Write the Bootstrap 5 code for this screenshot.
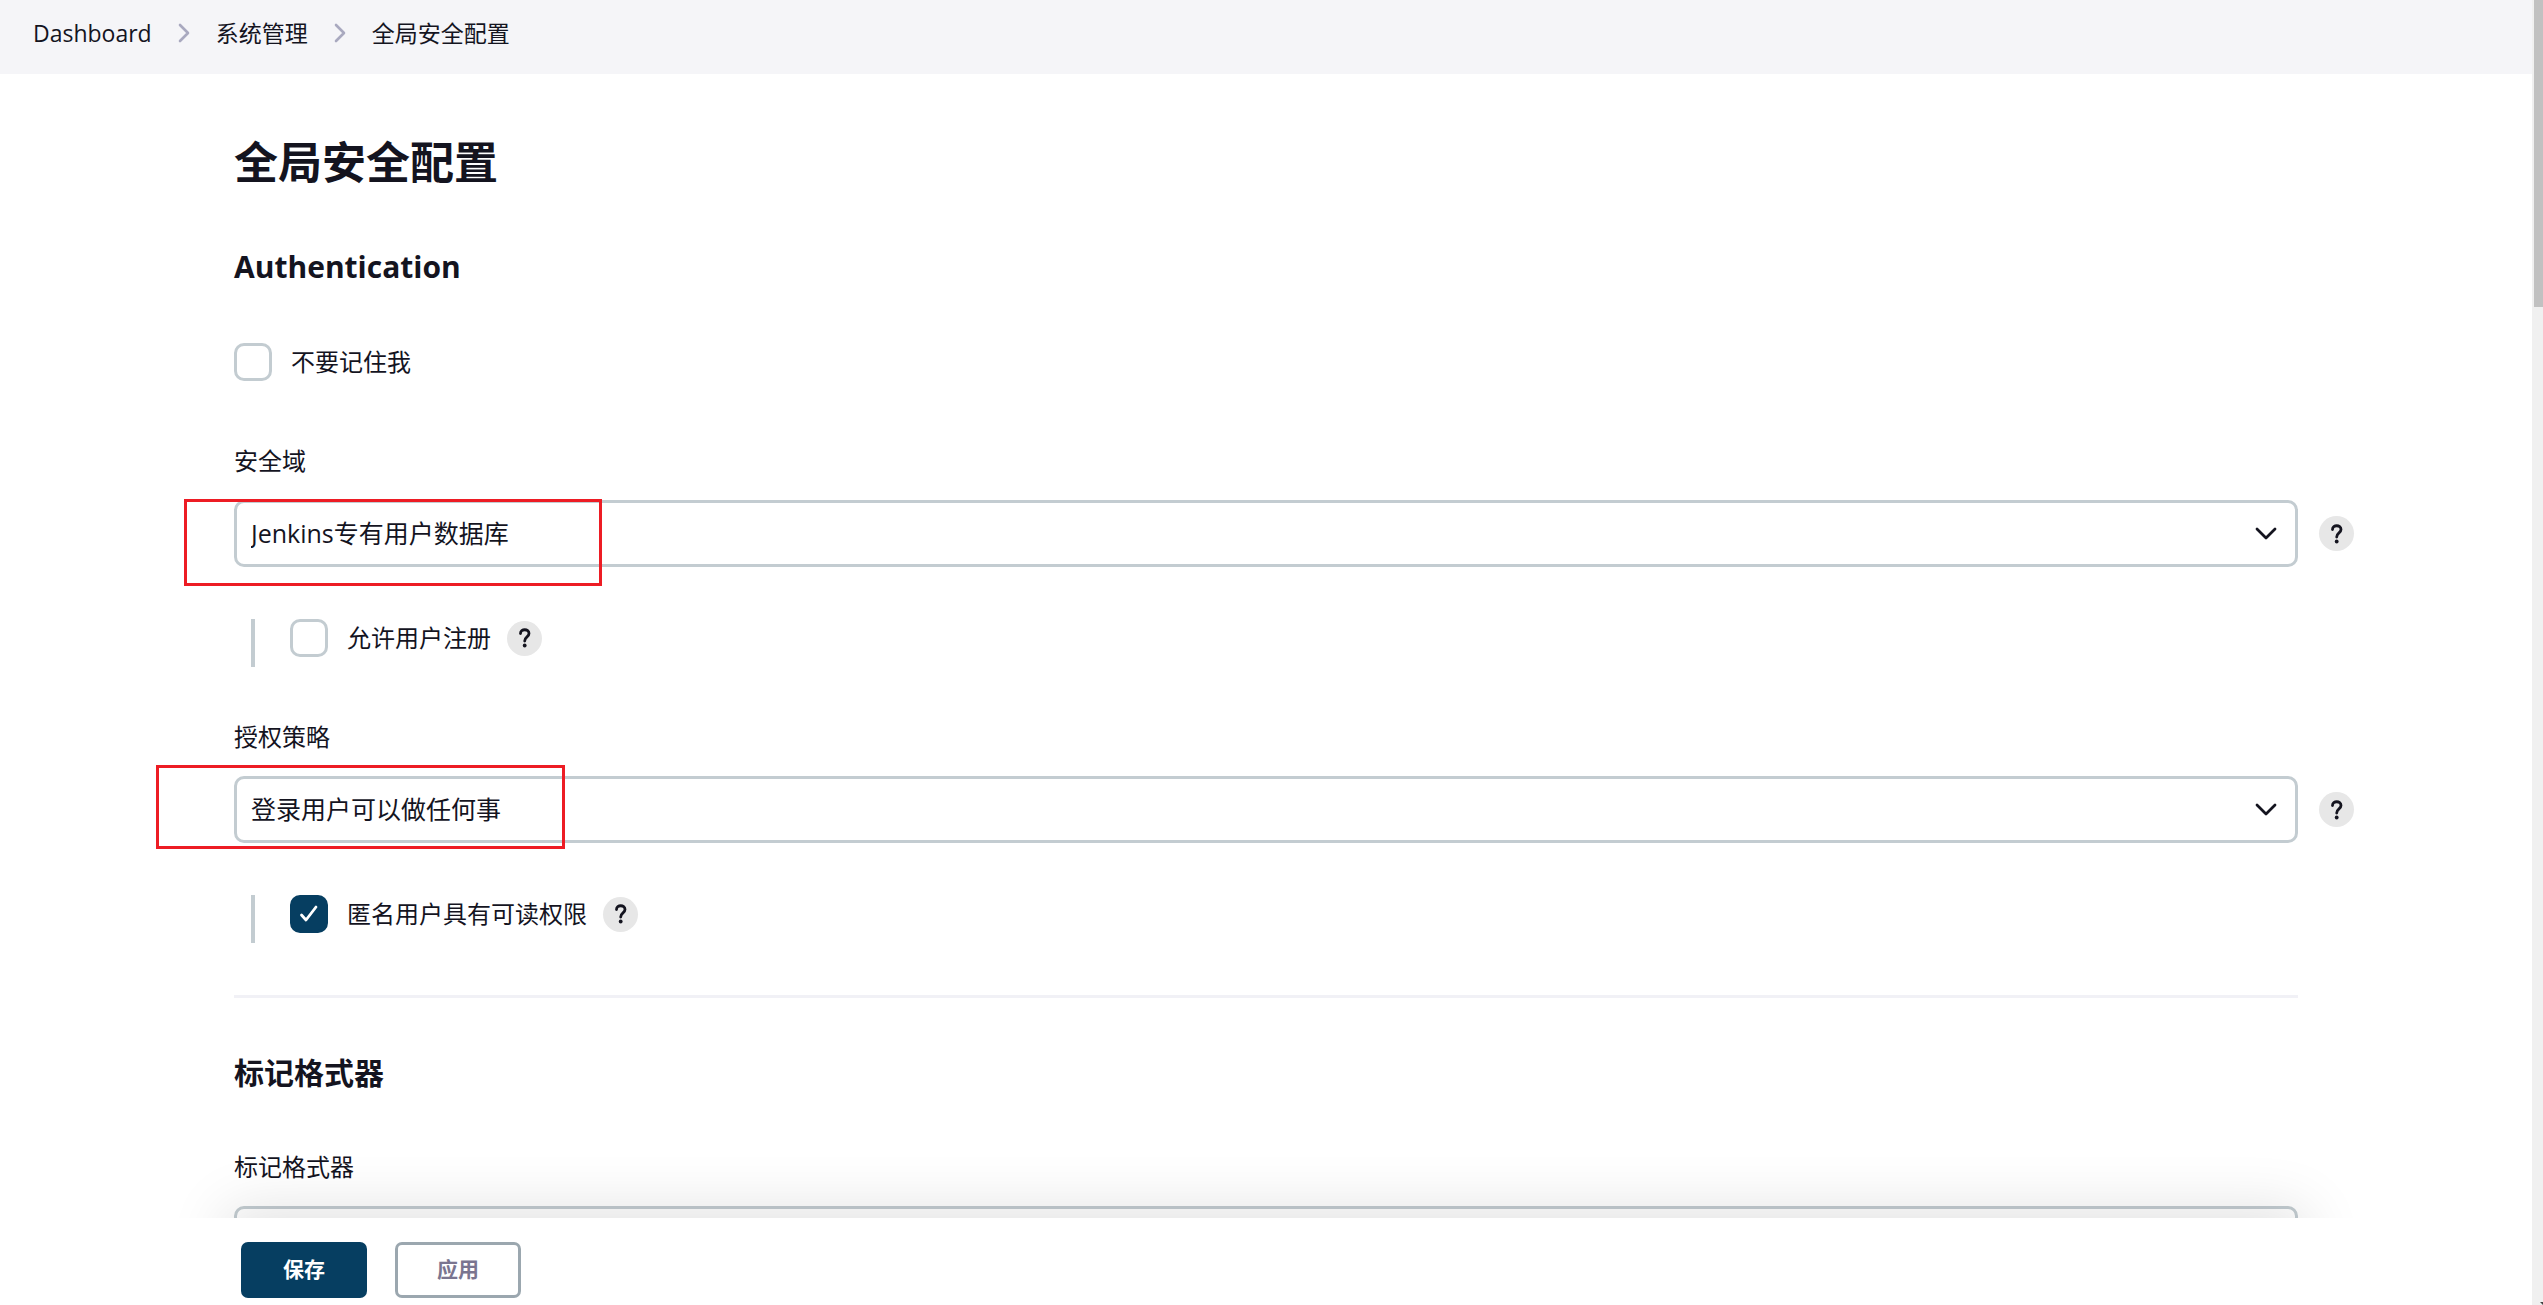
<!DOCTYPE html>
<html lang="zh-CN">
<head>
<meta charset="utf-8">
<meta name="viewport" content="width=device-width, initial-scale=1">
<title>全局安全配置 [Jenkins]</title>
<link href="https://cdn.jsdelivr.net/npm/bootstrap@5.3.0/dist/css/bootstrap.min.css" rel="stylesheet">
<style>
  :root { --ink: #14141f; --line: #c3ccd1; --primary: #063e61; --gutter: 234px; --scrollbar: 11px; }
  body { font-family: "Open Sans", "Noto Sans CJK SC", sans-serif; font-size: 24px; line-height: 36px; color: var(--ink); background: #fff; }
  .app-shell { padding-right: var(--scrollbar); }

  .crumb-bar { background: #f5f5f8; padding: 15px 33px 23px; font-size: 23px; }
  .crumb-bar .breadcrumb { gap: 26px; font-size: 23px; }
  .crumb-bar a { color: var(--ink); text-decoration: none; }
  .crumb-sep { width: 12px; height: 20px; display: block; }

  .config-main { padding: 58px 178px 0 var(--gutter); }
  .config-main h1 { font-size: 44px; line-height: 60px; font-weight: 700; margin: 0; }
  .config-main h2 { font-size: 30px; line-height: 40px; font-weight: 700; margin: 55px 56px 56px 0; }
  .config-main hr { border: 0; height: 3px; background: #f1f1f6; opacity: 1; margin: 52px 56px 0 0; }
  .field-group { margin-top: 52px; }
  .first-group { margin-top: 62px; }
  .after-heading { margin-top: 0; }
  .field-label { display: block; margin: 0 0 21px; }
  .field-row { gap: 21px; margin-right: 0; }
  .field-row.no-help { margin-right: 56px; }

  .field-select { height: 67px; border: 3px solid var(--line); border-radius: 10px; padding: 0 60px 0 14px; font-size: 25px; color: var(--ink); background-color: #fff;
    background-image: url("data:image/svg+xml,%3Csvg xmlns='http://www.w3.org/2000/svg' viewBox='0 0 22 14'%3E%3Cpath d='M2 2l9 9 9-9' fill='none' stroke='%2314141f' stroke-width='2.8' stroke-linecap='round' stroke-linejoin='round'/%3E%3C/svg%3E");
    background-size: 22px 14px; background-position: right 18px center; }

  .tick { gap: 19px; }
  .tick .form-check-input { width: 38px; height: 38px; margin: 0; border: 3px solid var(--line); border-radius: 10px; flex: none; }
  .tick .form-check-input:checked { background-color: var(--primary); border-color: var(--primary);
    background-image: url("data:image/svg+xml,%3Csvg xmlns='http://www.w3.org/2000/svg' viewBox='0 0 32 32'%3E%3Cpath d='M8.500 17l4.500 5 10-13' fill='none' stroke='%23fff' stroke-width='2.800' stroke-linecap='round' stroke-linejoin='round'/%3E%3C/svg%3E"); }

  .nested { margin: 52px 0 0 17px; border-left: 4px solid var(--line); height: 48px; padding-left: 35px; }
  .nested-row { gap: 16px; height: 38px; }

  .help-btn { width: 35px; height: 35px; padding: 0; border: 0; border-radius: 50%; background: #e7e7e7; flex: none; }
  .help-btn svg { display: block; margin: auto; width: 13px; height: 20px; }

  .callout { position: absolute; border: 3px solid #ed1c24; pointer-events: none; }
  .callout-realm { left: -50px; top: -1px; width: 418px; height: 87px; }
  .callout-strategy { left: -78px; top: -11px; width: 409px; height: 84px; }

  .action-bar { z-index: 2; isolation: isolate; }
  .action-bar::before { content: ""; position: absolute; z-index: -1; inset: 0 var(--gutter); box-shadow: 0 0 60px 8px rgba(0,0,0,.12); }
  .action-inner { background: rgba(255,255,255,.95); padding: 24px var(--gutter) 7px 241px; gap: 28px; }
  .action-inner .btn { width: 126px; height: 56px; padding: 0; border-radius: 7px; font-size: 21px; font-weight: 700; }
  .btn-save { background: var(--primary); color: #fff; }
  .btn-apply { background: #fff; color: #7a7590; border: 3px solid #9ba7af; }

  .scroll-track { position: fixed; inset: 0 0 0 auto; width: var(--scrollbar); background: #f0f0f0; z-index: 3; }
  .scroll-thumb { height: 307px; margin-left: 2px; background: #c1c1c1; }
  .scroll-arrow { position: absolute; right: 0; bottom: 0; width: 3px; height: 3px; }
</style>
</head>
<body>
<div class="app-shell vh-100 d-flex flex-column overflow-hidden">
  <nav class="crumb-bar flex-shrink-0" aria-label="breadcrumb">
    <div class="breadcrumb m-0 d-flex align-items-center">
      <a href="#">Dashboard</a>
      <svg class="crumb-sep" viewBox="0 0 12 20" aria-hidden="true"><path d="M2 2l8 8-8 8" fill="none" stroke="#a9a9bf" stroke-width="2.600" stroke-linecap="round" stroke-linejoin="round"/></svg>
      <a href="#">系统管理</a>
      <svg class="crumb-sep" viewBox="0 0 12 20" aria-hidden="true"><path d="M2 2l8 8-8 8" fill="none" stroke="#a9a9bf" stroke-width="2.600" stroke-linecap="round" stroke-linejoin="round"/></svg>
      <a href="#" aria-current="page">全局安全配置</a>
    </div>
  </nav>

  <main class="config-main flex-grow-1 overflow-hidden">
    <h1>全局安全配置</h1>

    <h2>Authentication</h2>
    <div class="tick d-flex align-items-center">
      <input class="form-check-input" type="checkbox" id="noRemember">
      <label for="noRemember">不要记住我</label>
    </div>

    <div class="field-group first-group">
      <label class="field-label" for="realm">安全域</label>
      <div class="field-row d-flex align-items-center position-relative">
        <select class="form-select field-select" id="realm"><option>Jenkins专有用户数据库</option></select>
        <button type="button" class="help-btn" aria-label="Help"><svg viewBox="0 0 13 20"><path d="M2.500 5.500c0-5 8.500-5 8.500 0 0 3.500-4.300 3.300-4.300 7.500" fill="none" stroke="#14141f" stroke-width="2.800" stroke-linecap="round"/><circle cx="6.700" cy="17.500" r="1.900" fill="#14141f"/></svg></button>
        <span class="callout callout-realm"></span>
      </div>
      <div class="nested">
        <div class="nested-row d-flex align-items-center">
          <div class="tick d-flex align-items-center">
            <input class="form-check-input" type="checkbox" id="allowSignup">
            <label for="allowSignup">允许用户注册</label>
          </div>
          <button type="button" class="help-btn" aria-label="Help"><svg viewBox="0 0 13 20"><path d="M2.500 5.500c0-5 8.500-5 8.500 0 0 3.500-4.300 3.300-4.300 7.500" fill="none" stroke="#14141f" stroke-width="2.800" stroke-linecap="round"/><circle cx="6.700" cy="17.500" r="1.900" fill="#14141f"/></svg></button>
        </div>
      </div>
    </div>

    <div class="field-group">
      <label class="field-label" for="strategy">授权策略</label>
      <div class="field-row d-flex align-items-center position-relative">
        <select class="form-select field-select" id="strategy"><option>登录用户可以做任何事</option></select>
        <button type="button" class="help-btn" aria-label="Help"><svg viewBox="0 0 13 20"><path d="M2.500 5.500c0-5 8.500-5 8.500 0 0 3.500-4.300 3.300-4.300 7.500" fill="none" stroke="#14141f" stroke-width="2.800" stroke-linecap="round"/><circle cx="6.700" cy="17.500" r="1.900" fill="#14141f"/></svg></button>
        <span class="callout callout-strategy"></span>
      </div>
      <div class="nested">
        <div class="nested-row d-flex align-items-center">
          <div class="tick d-flex align-items-center">
            <input class="form-check-input" type="checkbox" id="anonRead" checked>
            <label for="anonRead">匿名用户具有可读权限</label>
          </div>
          <button type="button" class="help-btn" aria-label="Help"><svg viewBox="0 0 13 20"><path d="M2.500 5.500c0-5 8.500-5 8.500 0 0 3.500-4.300 3.300-4.300 7.500" fill="none" stroke="#14141f" stroke-width="2.800" stroke-linecap="round"/><circle cx="6.700" cy="17.500" r="1.900" fill="#14141f"/></svg></button>
        </div>
      </div>
    </div>

    <hr>

    <h2>标记格式器</h2>
    <div class="field-group after-heading">
      <label class="field-label" for="formatter">标记格式器</label>
      <div class="field-row no-help d-flex">
        <select class="form-select field-select" id="formatter"><option></option></select>
      </div>
    </div>
  </main>

  <footer class="action-bar position-relative flex-shrink-0">
    <div class="action-inner d-flex">
      <button type="submit" class="btn btn-save">保存</button>
      <button type="button" class="btn btn-apply">应用</button>
    </div>
  </footer>
</div>

<div class="scroll-track" aria-hidden="true">
  <div class="scroll-thumb"></div>
  <svg class="scroll-arrow" viewBox="0 0 3 3"><path d="M0 0h3v3z" fill="#404040"/></svg>
</div>
<script src="https://cdn.jsdelivr.net/npm/bootstrap@5.3.0/dist/js/bootstrap.bundle.min.js"></script>
</body>
</html>
